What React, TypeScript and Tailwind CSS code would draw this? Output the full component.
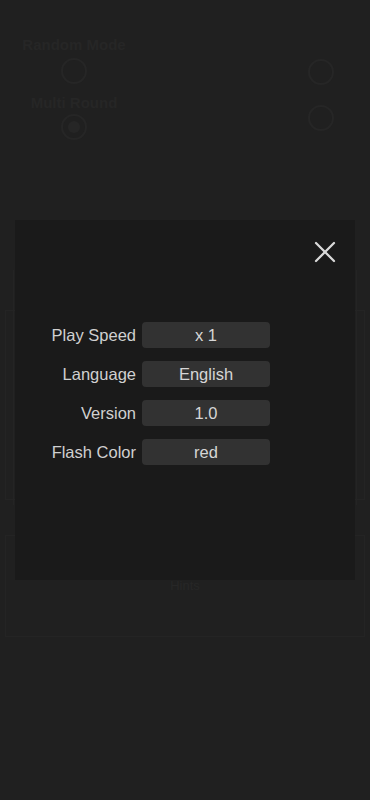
import { X } from "lucide-react";

const settings = [
  { label: "Play Speed", value: "x 1" },
  { label: "Language", value: "English" },
  { label: "Version", value: "1.0" },
  { label: "Flash Color", value: "red" },
];

function Radio({ filled }: { filled?: boolean }) {
  return (
    <div className="w-[26px] h-[26px] rounded-full border-2 border-[#262626] flex items-center justify-center">
      {filled && <div className="w-[12px] h-[12px] rounded-full bg-[#262626]" />}
    </div>
  );
}

function SettingsModal() {
  return (
    <div className="absolute left-[15px] top-[220px] w-[340px] h-[360px] bg-[#1a1a1a]">
      <button className="absolute right-[12px] top-[14px] text-[#d9d9d9]">
        <X size={36} strokeWidth={1.5} />
      </button>
      <div className="pt-[102px] pl-[18px] flex flex-col gap-[13px]">
        {settings.map(s => (
          <div key={s.label} className="flex items-center">
            <span className="w-[103px] text-right text-[16.5px] text-[#d0d0d0]">{s.label}</span>
            <span className="ml-[6px] w-[128px] h-[26px] rounded-[4px] bg-[#323232] flex items-center justify-center text-[16.5px] text-[#d6d6d6]">
              {s.value}
            </span>
          </div>
        ))}
      </div>
    </div>
  );
}

export default function App() {
  return (
    <div className="relative w-[370px] h-[800px] bg-[#202020] overflow-hidden font-['Liberation_Sans',Arial,sans-serif]">
      <div className="h-[140px] flex justify-between pt-[36px] pl-[18px] pr-[18px]">
        <div className="w-[112px] flex flex-col items-center text-[15px] text-[#262626] font-bold">
          <span className="leading-[18px]">Random Mode</span>
          <div className="mt-[4px]"><Radio /></div>
          <span className="mt-[10px] leading-[18px]">Multi Round</span>
          <div className="mt-[2px]"><Radio filled /></div>
        </div>
        <div className="flex flex-col items-center gap-[20px] pt-[23px] pr-[18px]">
          <Radio />
          <Radio />
        </div>
      </div>
      <div className="mx-[13px] mt-[130px] h-[235px] border-x border-[#242424]" />
      <div className="mx-[5px] -mt-[195px] h-[190px] border border-[#242424]" />
      <div className="mx-[5px] mt-[35px] h-[102px] border border-[#242424] flex items-center justify-center text-[13px] text-[#272727]">
        Hints
      </div>
      <SettingsModal />
    </div>
  );
}
